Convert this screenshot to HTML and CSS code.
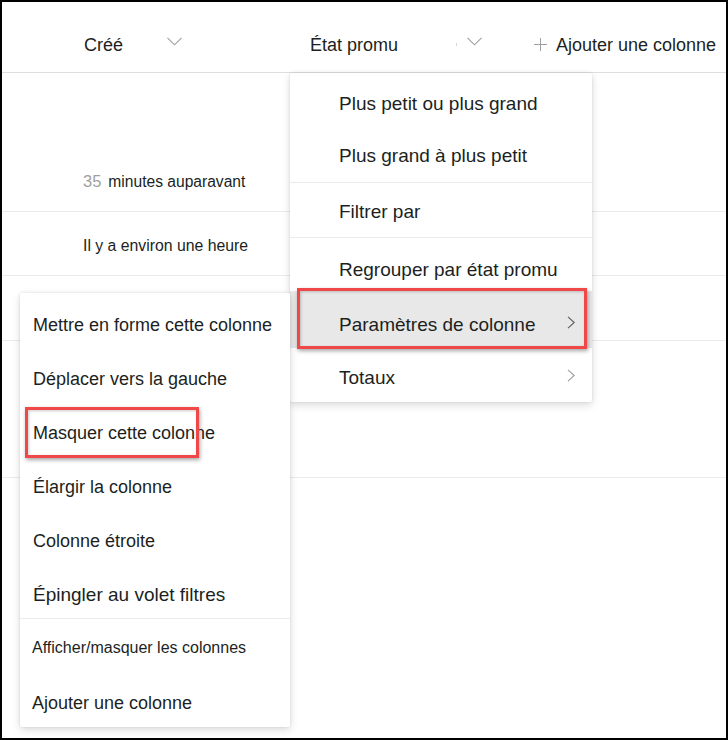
FILE: index.html
```html
<!DOCTYPE html>
<html lang="fr">
<head>
<meta charset="utf-8">
<title>Paramètres de colonne</title>
<link rel="stylesheet" href="styles.css">
</head>
<body>
<div class="frame">
  <div class="header">
    <div class="hcell hc1">
      <span class="hname n1">Créé</span>
      <svg class="chev-down" width="15" height="9" viewBox="0 0 15 9"><path d="M0.5 0.8 L7.5 7.8 L14.5 0.8" fill="none" stroke="#a19f9d" stroke-width="1.1"/></svg>
    </div>
    <div class="hcell hc2">
      <span class="hname n2">État promu</span>
      <span class="tick"></span>
      <svg class="chev-down" width="15" height="9" viewBox="0 0 15 9"><path d="M0.5 0.8 L7.5 7.8 L14.5 0.8" fill="none" stroke="#a19f9d" stroke-width="1.1"/></svg>
    </div>
    <div class="hcell hc3">
      <svg class="plus" width="13" height="13" viewBox="0 0 13 13"><path d="M6.5 0 V13 M0 6.5 H13" fill="none" stroke="#a19f9d" stroke-width="1"/></svg>
      <span class="hname">Ajouter une colonne</span>
    </div>
  </div>

  <div class="row r1"><div class="cell"><span class="num">35</span><span class="rtext t1">minutes auparavant</span></div></div>
  <div class="row r2"><div class="cell"><span class="rtext t2">Il y a environ une heure</span></div></div>
  <div class="row r3"></div>
  <div class="row r4"></div>

  <div class="menu menu-main">
    <div class="item mi1">Plus petit ou plus grand</div>
    <div class="item mi2">Plus grand à plus petit</div>
    <div class="sep"></div>
    <div class="item mi3">Filtrer par</div>
    <div class="sep"></div>
    <div class="item mi4">Regrouper par état promu</div>
    <div class="item mi5 active"><span>Paramètres de colonne</span>
      <svg class="chev-right" width="9" height="13" viewBox="0 0 9 13"><path d="M1 0.8 L7.2 6.5 L1 12.2" fill="none" stroke="#605e5c" stroke-width="1.1"/></svg>
    </div>
    <div class="item mi6"><span>Totaux</span>
      <svg class="chev-right" width="9" height="13" viewBox="0 0 9 13"><path d="M1 0.8 L7.2 6.5 L1 12.2" fill="none" stroke="#a19f9d" stroke-width="1.1"/></svg>
    </div>
  </div>

  <div class="menu menu-sub">
    <div class="sitem">Mettre en forme cette colonne</div>
    <div class="sitem">Déplacer vers la gauche</div>
    <div class="sitem">Masquer cette colonne</div>
    <div class="sitem">Élargir la colonne</div>
    <div class="sitem">Colonne étroite</div>
    <div class="sitem si6">Épingler au volet filtres</div>
    <div class="sep"></div>
    <div class="sitem si7">Afficher/masquer les colonnes</div>
    <div class="sitem si8">Ajouter une colonne</div>
  </div>

  <div class="callout c1"></div>
  <div class="callout c2"></div>
</div>
</body>
</html>
```

FILE: styles.css
```css
* { box-sizing: border-box; }

html, body {
  margin: 0;
  padding: 0;
  background: #ffffff;
}

body {
  font-family: "Liberation Sans", Arial, sans-serif;
  color: #201f1e;
}

.frame {
  position: relative;
  width: 728px;
  height: 740px;
  border: 2px solid #000000;
  overflow: hidden;
  background: #ffffff;
}

/* ---------- header ---------- */
.header {
  display: flex;
  height: 71px;
  padding-top: 16px;
  border-bottom: 1px solid #e1dfdd;
  align-items: center;
}

.hcell {
  display: flex;
  align-items: center;
  font-size: 18px;
  line-height: 22px;
}

.hc1 { width: 288px; padding-left: 82px; }
.hc2 { width: 232px; padding-left: 20px; }
.hc3 { padding-left: 12px; }

.hname { white-space: nowrap; }
.n1 { width: 83px; }
.n2 { width: 146px; }

.chev-down { display: block; margin-top: -8px; }

.tick {
  width: 1px;
  height: 3px;
  background: #d6d6d6;
  margin-right: 10px;
  margin-top: -2px;
}

.plus { display: block; margin-right: 9px; margin-top: -2px; }

/* ---------- rows ---------- */
.row {
  border-bottom: 1px solid #edebe9;
}

.r1 { height: 139px; padding-top: 98px; }
.r2 { height: 64px; padding-top: 24px; }
.r3 { height: 65px; }
.r4 { height: 137px; }

.cell {
  padding-left: 81px;
  line-height: 20px;
  white-space: nowrap;
}

.num {
  font-size: 16.5px;
  color: #a19f9d;
  margin-right: 7px;
}

.rtext { color: #201f1e; }
.t1 { font-size: 15.6px; }
.t2 { font-size: 15.8px; }

/* ---------- menus ---------- */
.menu {
  position: absolute;
  background: #ffffff;
  border-radius: 2px;
  box-shadow: 0 3px 8px rgba(0, 0, 0, 0.14), 0 0 3px rgba(0, 0, 0, 0.10);
}

.menu-main {
  left: 288px;
  top: 71px;
  width: 302px;
  height: 329px;
  z-index: 1;
}

.menu-sub {
  left: 18px;
  top: 291px;
  width: 270px;
  height: 434px;
  padding-top: 5px;
  z-index: 2;
}

.sep {
  height: 1px;
  background: #edebe9;
}

.item {
  display: flex;
  align-items: center;
  justify-content: space-between;
  padding-left: 49px;
  padding-right: 16px;
  font-size: 19px;
  line-height: 24px;
  white-space: nowrap;
}

.mi1 { height: 57px; padding-top: 4px; }
.mi2 { height: 52px; }
.mi3 { height: 54px; padding-top: 3px; }
.mi4 { height: 53px; padding-top: 10px; }
.mi5 { height: 57px; padding-top: 11px; }
.mi6 { height: 54px; padding-top: 5px; }

.active { background: #e8e8e8; }

.chev-right { display: block; margin-top: -6px; }
.mi6 .chev-right { margin-top: -4px; }

.sitem {
  display: flex;
  align-items: center;
  height: 54px;
  padding-left: 13px;
  font-size: 18px;
  line-height: 22px;
  white-space: nowrap;
}

.si6 { height: 50px; padding-top: 4px; font-size: 19px; }
.si7 { height: 58px; font-size: 16px; padding-left: 12px; }
.si8 { height: 50px; padding-top: 2px; padding-left: 12px; }

/* ---------- annotation callouts ---------- */
.callout {
  position: absolute;
  border: 3px solid #f04848;
  box-shadow: 1px 2px 4px rgba(0, 0, 0, 0.35), inset 1px 1px 3px rgba(0, 0, 0, 0.2);
  z-index: 3;
}

.c1 { left: 295px; top: 286px; width: 290px; height: 61px; }
.c2 { left: 23px; top: 405px; width: 174px; height: 51px; }
```
